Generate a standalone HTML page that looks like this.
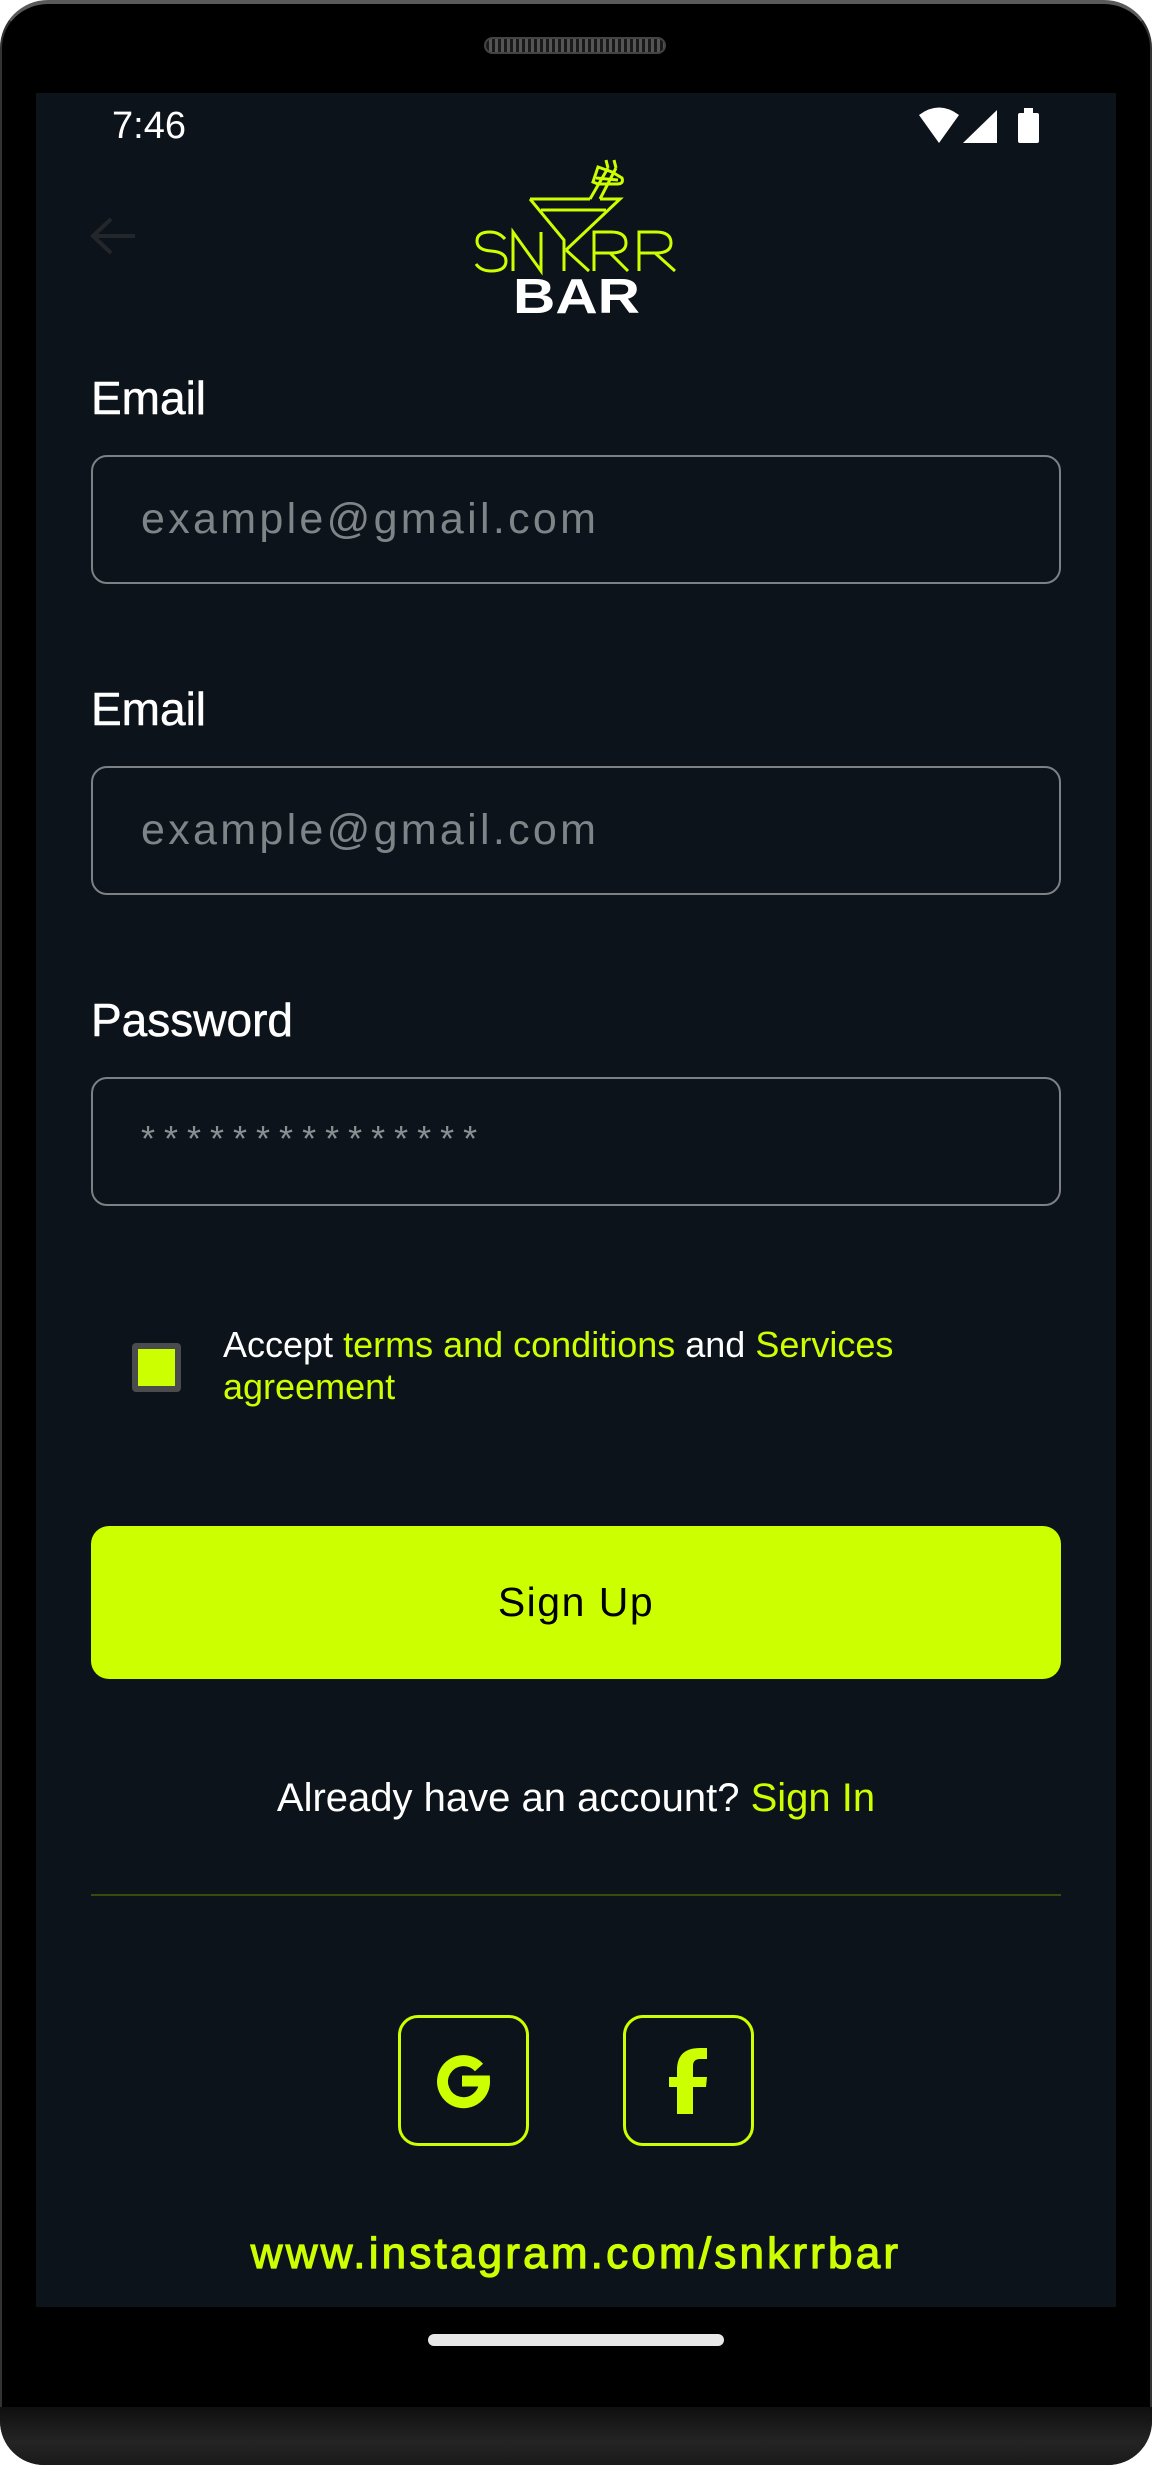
<!DOCTYPE html>
<html><head><meta charset="utf-8"><style>
*{margin:0;padding:0;box-sizing:border-box}
body{width:1152px;height:2465px;background:#fff;position:relative;overflow:hidden;font-family:"Liberation Sans",sans-serif}
.phone{position:absolute;left:0;top:0;width:1152px;height:2465px;background:#000;border-radius:48px 48px 44px 44px;border-top:4px solid #5a5a5a;border-left:2px solid #333;border-right:2px solid #333;overflow:hidden}
.chin{position:absolute;left:0;top:2407px;width:1152px;height:58px;background:linear-gradient(#0f0f0f,#242424 60%,#1a1a1a);border-radius:0 0 44px 44px}
.screen{position:absolute;left:36px;top:93px;width:1080px;height:2214px;background:#0d131a}
.a{position:absolute;white-space:nowrap}
.lbl{color:#fff;font-size:46px;left:91px;-webkit-text-stroke:0.5px #fff}
.box{position:absolute;left:91px;width:970px;height:129px;border:2.5px solid #7d8185;border-radius:16px}
.ph{color:#7f8488;font-size:43px;letter-spacing:3.3px;left:141px}
.lime{color:#ccff00}
</style></head><body>
<div class="phone"></div>
<div class="chin"></div>
<div class="a" style="left:484px;top:37px;width:182px;height:17px;border-radius:9px;background:repeating-linear-gradient(90deg,#1a1a1a 0 3px,#555 3px 6px);border:2px solid #444"></div>
<div class="screen"></div>
<div class="a" style="left:112px;top:105px;color:#fff;font-size:38px">7:46</div>
<svg class="a" style="left:910px;top:106px" width="140" height="40" viewBox="910 106 140 40">
<path d="M919,115 Q939,100 959,115 L939,143 Z" fill="#fff"/>
<path d="M997,110 V143 H963 Z" fill="#fff"/>
<rect x="1018" y="113" width="21" height="30" rx="2" fill="#fff"/><rect x="1024" y="108" width="9" height="6" fill="#fff"/>
</svg>
<svg class="a" style="left:85px;top:212px" width="60" height="50" viewBox="85 212 60 50"><path d="M135,236 H94 M111,219 L93,236 L111,253" stroke="#23272b" stroke-width="4" fill="none"/></svg>
<svg class="a" style="left:460px;top:150px" width="240" height="170" viewBox="460 150 240 170">
<g stroke="#ccff00" stroke-width="3" fill="none" stroke-linejoin="miter">
<path d="M530,199 H590 M600,199 H620 L566,250 M530,199 L564,240 V271"/>
<path d="M541,210 H606"/>
<path d="M590,199 L608,168 M600,199 L616,168 M606,160 L608,168 M614,160 L616,168"/>
<path d="M593,182 L598,167 L612,172 L622,178 Q624,184 617,184 L598,184 Z M596,178 L618,180"/>
<path d="M505,239 Q499,232 490,232 Q477,232 477,241 Q477,250 491,251 Q506,252 506,261 Q506,271 491,271 Q481,271 476,264"/>
<path d="M513,271 V232 L541,271 V232"/>
<path d="M566,250 L589,271"/>
<path d="M594,271 V232 H611 Q626,232 626,243 Q626,253 611,253 H594 M610,253 L628,271"/>
<path d="M639,271 V232 H656 Q671,232 671,243 Q671,253 656,253 H639 M655,253 L675,271"/>
</g>
<text x="513" y="313" font-family="Liberation Sans" font-weight="bold" font-size="49" fill="#fff" textLength="127" lengthAdjust="spacingAndGlyphs">BAR</text>
</svg>
<div class="a lbl" style="top:371px">Email</div>
<div class="box" style="top:455px"></div>
<div class="a ph" style="top:495px">example@gmail.com</div>
<div class="a lbl" style="top:682px">Email</div>
<div class="box" style="top:766px"></div>
<div class="a ph" style="top:806px">example@gmail.com</div>
<div class="a lbl" style="top:993px">Password</div>
<div class="box" style="top:1077px"></div>
<div class="a" style="left:141px;top:1118px;color:#8a8f93;font-size:36px;letter-spacing:9px">***************</div>
<div class="a" style="left:132px;top:1343px;width:49px;height:49px;border:6px solid #4a4b4d;border-radius:4px;background:#ccff00"></div>
<div class="a" style="left:223px;top:1324px;color:#fff;font-size:36px;line-height:42px">Accept <span class="lime">terms and conditions</span> and <span class="lime">Services</span><br><span class="lime">agreement</span></div>
<div class="a" style="left:91px;top:1526px;width:970px;height:153px;border-radius:18px;background:#ccff00;color:#000;font-size:41px;letter-spacing:1.5px;text-align:center;line-height:153px">Sign Up</div>
<div class="a" style="left:0;width:1152px;top:1776px;text-align:center;color:#fff;font-size:40px">Already have an account? <span class="lime">Sign In</span></div>
<div class="a" style="left:91px;top:1894px;width:970px;height:2px;background:#3a4a0c"></div>
<div class="a" style="left:398px;top:2015px;width:131px;height:131px;border:3px solid #ccff00;border-radius:20px"></div>
<div class="a" style="left:623px;top:2015px;width:131px;height:131px;border:3px solid #ccff00;border-radius:20px"></div>
<svg class="a" style="left:430px;top:2040px" width="300" height="90" viewBox="430 2040 300 90">
<path d="M479,2067.5 A21,21 0 1 0 484.5,2081 H462" stroke="#ccff00" stroke-width="11" fill="none"/>
<path d="M677,2114 V2087 H669 V2077 H677 V2070 Q677,2048 700,2048 H707 V2059 H700 Q693,2059 693,2066 V2077 H707 L706,2087 H693 V2114 Z" fill="#ccff00"/>
</svg>
<div class="a lime" style="left:0;width:1152px;top:2229px;text-align:center;font-size:44px;letter-spacing:3.2px;-webkit-text-stroke:1.2px #ccff00">www.instagram.com/snkrrbar</div>
<div class="a" style="left:428px;top:2334px;width:296px;height:12px;border-radius:6px;background:#e8e8e8"></div>
</body></html>
